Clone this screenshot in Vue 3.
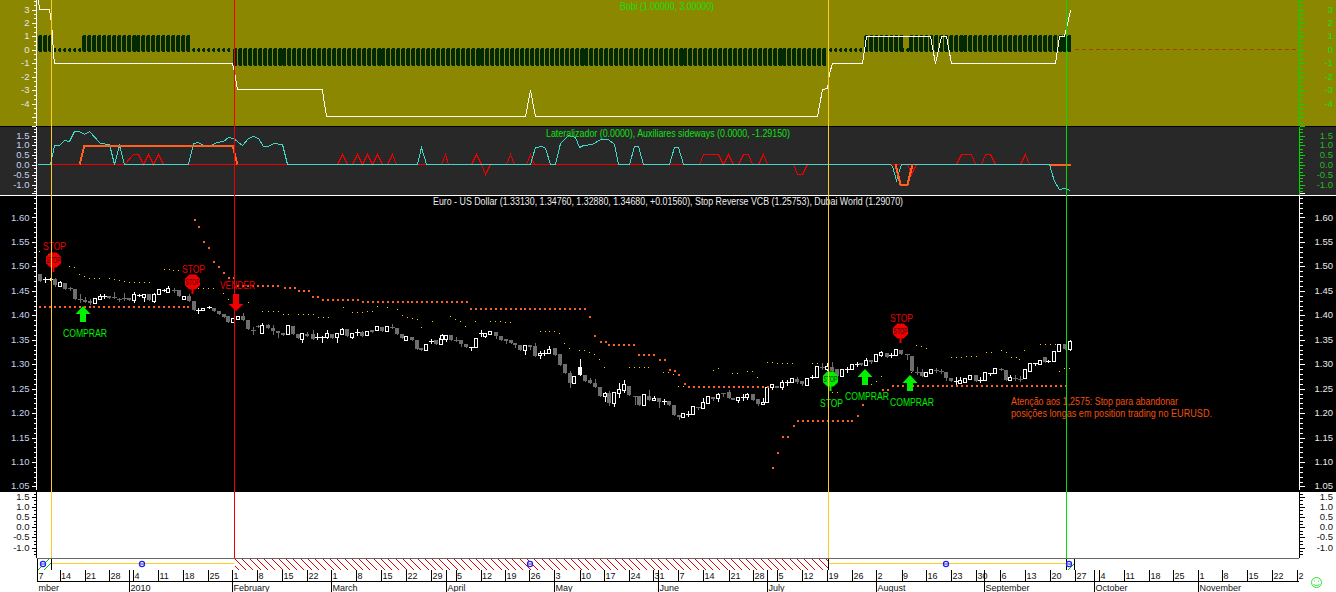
<script setup>
// zoomed reads of the price bars: [x, kind, top, bottom, wickTop, wickBottom]
// kinds: g gray body, w hollow, f filled white, d white doji, e gray doji
const partA = [
  [120,'g',237,258],[135,'d',253,253,247,260],[150,'d',252,252,249,256],[165,'g',252,270,250,272],[180,'w',262,272,258,272],[195,'g',264,282],[210,'e',280,280,276,284],[225,'g',282,312],[240,'e',312,312,298,322],[255,'g',316,320,305,322],[270,'g',318,322,312,326],[285,'w',308,324],[300,'w',303,311,298,312],[312,'d',302,302,296,308],[328,'g',303,308],[343,'e',307,307,290,310],[358,'e',313,313,308,318],[373,'e',309,309,295,315],[387,'g',310,314],[402,'w',298,316,292,320],[417,'d',300,300,296,304],[432,'w',297,305,297,317],[447,'g',298,316],[462,'w',297,318,295,320],[477,'w',282,298],[491,'d',285,285,282,288],[505,'w',280,290,272,290],[521,'e',285,285,280,290],[537,'g',285,304],[551,'w',302,312],[566,'g',302,318,296,318],[581,'g',318,345],[594,'d',344,344,338,355],[609,'w',338,346],[626,'d',337,337,333,340],[641,'g',338,348],[656,'g',347,358],[671,'g',356,365],[685,'g',364,380],[699,'w',370,380],[714,'w',364,372],[729,'g',362,375,354,375],[744,'g',375,402],[759,'e',404,404,396,418],[773,'e',393,393,390,396],[786,'w',390,413,384,413],[803,'g',390,398,388,400],[818,'g',400,408,390,416],[833,'g',407,415,407,425],[848,'g',415,420],[863,'w',390,418],[878,'g',392,418],[893,'g',418,430],[907,'w',415,432,415,440],[922,'g',418,422,410,422],[938,'g',418,432,406,432],[952,'d',425,425,413,432],[966,'d',427,427,424,440],[981,'w',414,425,406,430],[996,'g',416,428],[1011,'w',415,426,415,442],[1025,'w',403,416,400,416],[1042,'g',403,424],[1056,'w',415,425,415,430],[1071,'d',412,412,403,420],[1086,'g',412,422,408,424],[1100,'w',408,420],[1115,'g',406,412],[1130,'w',393,406],[1145,'g',396,408],[1160,'w',394,408],[1175,'e',395,395,388,398],[1190,'g',400,416],[1205,'g',416,430],[1219,'w',424,434],[1235,'g',427,434],[1250,'g',434,462],[1264,'g',458,466],[1278,'w',448,466],[1293,'d',437,437,432,445],[1307,'g',434,447],[1322,'w',430,448]
]
const partB = [
  [-10,'w',135,146,132,146],[3,'w',136,146,136,152],[18,'g',135,150],[33,'e',151,151,140,152],[48,'g',150,163,150,168],[63,'g',162,171],[78,'d',170,170,170,180],[93,'w',145,170],[107,'d',130,130,120,138],[121,'w',130,138,130,141],[136,'w',124,131],[153,'g',125,138,125,145],[168,'g',138,150],[182,'g',148,154,148,160],[197,'g',150,160],[211,'g',158,164,158,170],[225,'g',164,180],[240,'w',165,180,165,192],[255,'g',166,170,166,178],[271,'g',168,198,158,198],[285,'w',188,195,183,205],[298,'d',188,188,180,195],[313,'w',177,189,168,189],[329,'g',175,196],[345,'g',192,225],[360,'g',222,248],[375,'g',250,278,243,290],[388,'w',258,278],[404,'f',232,254,208,254],[420,'g',255,272],[435,'g',270,279,265,279],[449,'g',279,290,267,290],[465,'g',291,318],[479,'w',310,318,306,332],[492,'g',308,340,303,345],[507,'w',307,338,307,348],[521,'w',298,309,280,322],[537,'w',282,300,270,305],[553,'g',288,316],[570,'e',317,317,317,342],[582,'g',318,344],[596,'w',312,344],[611,'g',318,330,300,330],[626,'w',323,330,318,330],[641,'g',324,335,324,350],[656,'d',333,333,326,341],[671,'g',333,345],[686,'g',345,374],[701,'g',374,380,374,386],[714,'w',370,380],[729,'d',371,371,362,378],[744,'w',349,371],[759,'e',351,351,351,358],[773,'w',337,353,324,353],[788,'w',319,340],[805,'g',320,326,320,330],[819,'w',313,325,308,332],[835,'e',310,310,310,318],[851,'g',306,323,300,323],[864,'g',324,328],[878,'w',321,330,321,335],[893,'d',320,320,312,330],[907,'w',313,322,309,328],[924,'g',312,330],[939,'g',326,342,326,345],[953,'w',335,342,325,342],[966,'w',290,335],[981,'w',283,291,283,296],[997,'g',287,290],[1011,'w',277,291,270,297],[1027,'d',276,276,270,285],[1042,'w',265,275],[1056,'g',266,276,262,280],[1071,'g',274,282,274,286],[1086,'w',263,285],[1100,'d',260,260,255,265],[1115,'w',229,260],[1130,'e',232,232,220,236],[1145,'w',228,237,220,240],[1160,'g',232,242,216,242],[1175,'g',238,258],[1190,'w',237,258],[1205,'d',236,236,230,245],[1220,'w',223,236],[1235,'d',221,221,216,228],[1249,'g',219,224],[1263,'w',209,224,204,224],[1279,'g',210,216,210,220],[1293,'w',193,212],[1309,'w',186,195,182,198],[1326,'g',190,200]
]
const partC = [
  [332,'d',166,166,160,172],[348,'w',148,165],[364,'g',150,162],[380,'e',162,162,162,178],[396,'g',168,213],[410,'e',216,216,200,222],[425,'g',216,228,208,228],[438,'w',216,227],[453,'w',206,218],[468,'e',209,209,204,216],[483,'e',214,214,208,220],[497,'g',217,234,217,240],[512,'g',233,242],[527,'d',242,242,232,252],[541,'w',240,248,232,248],[555,'w',233,245],[571,'w',225,236],[588,'g',226,243],[601,'d',240,240,232,246],[615,'w',217,240],[630,'d',218,218,218,225],[645,'w',205,218],[662,'e',207,207,204,209],[678,'g',210,240],[690,'w',231,239,226,239],[706,'e',233,233,226,240],[719,'e',236,236,228,242],[735,'w',208,235],[750,'w',190,212],[764,'d',189,189,189,195],[780,'w',180,192],[796,'g',170,187],[805,'d',184,184,181,187],[822,'w',153,182],[837,'w',131,154],[855,'g',133,147],[870,'w',123,147,120,150]
]

const read = (rows, ox, oy) => rows.map(([x, kind, top, bot, wt, wb]) => ({
  x: Math.round(ox + x / 3),
  kind,
  top: Math.round(oy + top / 3),
  bot: Math.round(oy + bot / 3),
  wt: Math.round(oy + (wt ?? top) / 3),
  wb: Math.round(oy + (wb ?? bot) / 3),
}))
const candles = [...read(partA, 0, 195), ...read(partB, 445, 290), ...read(partC, 780, 300)]

// stop reverse, orange runs: [x1, x2, y]
const stopRuns = [
  [39,190,306],[237,278,285],[284,294,287],[298,309,290],[312,318,296],[322,357,299],[362,466,301],[470,585,308],
  [608,635,344],[638,654,354],[688,768,386],[797,852,420],[892,1070,385],
]
const stopSingles = [
  [194,219],[198,226],[203,241],[208,247],[213,261],[218,266],[223,272],[228,277],[233,277],
  [589,316],[594,335],[600,341],[605,341],[659,359],[664,359],[669,369],[674,370],[678,374],[684,383],
  [772,467],[777,452],[782,436],[787,436],[793,425],[857,415],[862,404],[882,389],[887,389],
]
const stopDots = [
  ...stopRuns.flatMap(([a, b, y]) => {
    const out = []
    for (let x = a; x <= b; x += 4.95) out.push([Math.round(x), y])
    return out
  }),
  ...stopSingles,
]

const dubaiA = [[118,168],[145,178],[208,214],[222,217],[238,238],[253,243],[268,250],[283,250],[297,250],[328,250],[343,252],[358,255],[373,257],[388,262],[403,262],[418,262],[433,262],[447,262],[492,222],[507,222],[520,225],[535,225],[595,280],[610,280],[625,280],[640,280],[670,295],[685,312],[700,320],[715,320],[745,320],[787,349],[803,349],[818,349],[833,349],[848,357],[863,357],[893,357],[908,357],[923,357],[938,357],[953,365],[968,365],[983,365],[1028,337],[1057,352],[1072,352],[1085,352],[1100,349],[1115,349],[1130,334],[1160,337],[1190,343],[1205,361],[1220,366],[1235,370],[1250,373],[1262,395],[1295,377]]
const dubaiB = [[15,79],[30,88],[45,93],[60,109],[90,94],[135,94],[150,94],[165,94],[180,97],[195,97],[285,124],[300,124],[313,124],[328,124],[343,130],[358,160],[373,175],[403,181],[418,181],[433,187],[448,193],[463,208],[478,232],[552,232],[567,232],[582,232],[597,232],[610,232],[655,247],[670,247],[685,253],[700,289],[715,289],[805,241],[820,235],[862,250],[877,250],[907,244],[922,244],[937,262],[967,217],[982,217],[997,220],[1012,220],[1027,220],[1042,220],[1102,220],[1117,220],[1130,226],[1145,226],[1160,307],[1175,307],[1279,283],[1294,274],[1309,259]]
const dubaiC = [[408,136],[423,139],[438,145],[393,217],[514,172],[529,172],[544,172],[558,169],[573,169],[588,169],[617,157],[632,157],[662,151],[677,157],[692,172],[707,172],[718,178],[733,151],[781,133],[796,133],[811,133],[826,133],[838,214],[853,205],[868,205]]
const place = (rows, ox, oy) => rows.map(([x, y]) => [Math.round(ox + x / 3), Math.round(oy + y / 3)])
const dubaiDots = [...place(dubaiA, 0, 195), ...place(dubaiB, 445, 290), ...place(dubaiC, 780, 300)]

// Bobi histogram: +1 / 0 / -1 states over the x axis
const bobiStates = [[38,52,1],[53,81,0],[82,190,1],[192,232,0],[233,828,-1],[829,863,0],[864,900,1],[901,908,0],[909,1071,1]]
const bobiBars = []
for (const [a, b, state] of bobiStates) {
  for (let x = a; x < b - 1; x += 4.95) {
    const left = Math.round(x)
    const w = state === 0 ? 3 : 4
    const top = state === 1 ? 35 : 48
    const bot = state === -1 ? 66 : 52
    bobiBars.push(`${left + 1},${top} ${left + w - 1},${top} ${left + w},${top + 1} ${left + w},${bot - 1} ${left + w - 1},${bot} ${left + 1},${bot} ${left},${bot - 1} ${left},${top + 1}`)
  }
}
const bobiLine = [[38,0],[39,9],[49,9],[51,23],[52,35],[53,53],[54,63],[232,63],[234,72],[237,89],[322,89],[323,97],[326,116],[525,116],[530,90],[535,116],[817,116],[822,89],[827,88],[829,73],[832,63],[862,63],[866,36],[930,36],[935,63],[941,36],[946,36],[951,63],[1055,63],[1059,36],[1064,36],[1067,24],[1070,10]]
  .map(([x, y]) => `${x + 0.5},${y + 0.5}`).join(' ')

const lateralPath = (rows, ox) => rows.map(([x, y]) => `${Math.round(ox + x / 3) + 0.5},${Math.floor(y / 3) + 0.5}`).join(' ')
const cyanLine = [
  lateralPath([[110,493],[150,493],[163,436],[178,436],[193,421],[208,424],[223,394],[238,394],[253,403],[268,394],[300,430],[326,433],[342,493],[357,436],[372,493],[565,493],[580,430],[595,427],[610,436],[630,436],[650,427],[670,424],[683,412],[700,415],[725,436],[745,415],[760,409],[775,415],[790,439],[805,439],[820,430],[845,433],[862,493],[1250,493],[1262,442],[1277,493],[1335,493]], 0),
  lateralPath([[255,493],[270,442],[290,438],[300,445],[316,493],[330,493],[345,430],[370,406],[390,412],[402,442],[415,436],[440,433],[465,418],[490,418],[507,433],[520,493],[553,493],[568,439],[580,439],[595,493],[673,493],[688,442],[700,442],[713,493],[1335,493]], 445),
  lateralPath([[0,493],[5,500],[18,540],[33,493],[478,493],[492,545],[507,568],[523,564],[539,570]], 890),
].join(' ')
const orangeLine = lateralPath([[238,493],[253,435],[697,435],[712,493]], 0)
const orangeDip = lateralPath([[15,493],[30,552],[50,552],[65,493]], 890)
const orangeTail = lateralPath([[478,493],[540,493]], 890)
const redSpikes = [
  lateralPath([[372,493],[400,462],[415,462],[430,493],[445,462],[460,493],[475,462],[490,493]], 0),
  lateralPath([[1012,493],[1025,462],[1040,493]], 0),
  lateralPath([[1055,493],[1070,462],[1085,493],[1100,462],[1115,493],[1130,462],[1145,493]], 0),
  lateralPath([[1160,493],[1175,462],[1188,493]], 0),
  lateralPath([[-12,493],[0,462],[10,493]], 445),
  lateralPath([[78,493],[92,462],[107,493],[120,522],[135,493]], 445),
  lateralPath([[182,493],[196,462],[208,493]], 445),
  lateralPath([[242,493],[255,462],[268,493]], 445),
  lateralPath([[762,493],[775,462],[820,462],[835,493],[850,462],[865,493]], 445),
  lateralPath([[880,493],[893,462],[908,462],[922,493]], 445),
  lateralPath([[940,493],[953,462],[967,493]], 445),
  lateralPath([[1043,493],[1057,522],[1072,522],[1087,493]], 445),
  lateralPath([[52,493],[62,522],[77,493]], 890),
  lateralPath([[197,493],[212,462],[242,462],[255,493]], 890),
  lateralPath([[273,493],[285,462],[300,462],[315,493]], 890),
  lateralPath([[390,493],[404,462],[418,493]], 890),
]

const scale = (labels, first, step) => labels.map((text, i) => ({ text, y: first + step * i }))
const ticksFor = (first, step, divs, top, bottom) => {
  const out = []
  const sub = step / divs
  const start = first - Math.ceil((first - top) / sub) * sub
  let n = Math.round((start - first) / sub)
  for (let y = start; y <= bottom; y += sub, n++) {
    out.push({ y: Math.round(y) + 0.5, major: n % divs === 0 })
  }
  return out
}

const panes = [
  { key: 'bobi', top: 0, h: 126, labels: scale(['3','2','1','0','-1','-2','-3','-4'], 9.5, 13.45), ticks: ticksFor(9.5, 13.45, 3, 0, 126) },
  { key: 'lateral', top: 127, h: 68, labels: scale(['1.5','1.0','0.5','0.0','-0.5','-1.0'], 135.5, 9.85), ticks: ticksFor(135.5, 9.85, 3, 127, 194) },
  { key: 'price', top: 196, h: 294, labels: scale(['1.60','1.55','1.50','1.45','1.40','1.35','1.30','1.25','1.20','1.15','1.10','1.05'], 217.5, 24.45), ticks: ticksFor(217.5, 24.45, 5, 196, 489) },
  { key: 'blank', top: 492, h: 66, labels: scale(['1.5','1.0','0.5','0.0','-0.5','-1.0'], 497, 10.1), ticks: ticksFor(497, 10.1, 3, 492, 557) },
]

const stopSigns = [
  { cx: 53.5, cy: 260, tone: 'red', lx: 54.5, ly: 246 },
  { cx: 192.5, cy: 282, tone: 'red', lx: 193.5, ly: 269 },
  { cx: 900.5, cy: 331, tone: 'red', lx: 901.5, ly: 318 },
  { cx: 830.5, cy: 379, tone: 'green', lx: 831.5, ly: 403 },
]
const octagon = (cx, cy) => {
  const a = 7.5
  const b = 3.2
  return [[-b,-a],[b,-a],[a,-b],[a,b],[b,a],[-b,a],[-a,b],[-a,-b]].map(([x, y]) => `${cx + x},${cy + y}`).join(' ')
}
const upArrow = (x, y) => `${x},${y} ${x + 7.5},${y + 8} ${x + 3},${y + 8} ${x + 3},${y + 16} ${x - 3},${y + 16} ${x - 3},${y + 8} ${x - 7.5},${y + 8}`
const downArrow = (x, y) => `${x},${y} ${x + 7.5},${y - 7} ${x + 3},${y - 7} ${x + 3},${y - 17} ${x - 3},${y - 17} ${x - 3},${y - 7} ${x - 7.5},${y - 7}`
const upArrows = [[83,306],[865,369],[910,375]]
const buyLabels = [[85,337],[867,399.5],[912,406]]

const weeks = [[37,'7'],[59.5,'14'],[84.5,'21'],[109,'28'],[133,'4'],[158,'11'],[183,'18'],[208,'25'],[232,'1'],[257,'8'],[282,'15'],[307,'22'],[331,'1'],[356,'8'],[381,'15'],[406,'22'],[431,'29'],[455.5,'5'],[480.5,'12'],[505,'19'],[529,'26'],[554,'3'],[579.5,'10'],[604,'17'],[629,'24'],[653,'31'],[678,'7'],[703,'14'],[729,'21'],[753,'28'],[777,'5'],[802,'12'],[827,'19'],[852,'26'],[876,'2'],[901.5,'9'],[926,'16'],[951,'23'],[976,'30'],[1000,'6'],[1025,'13'],[1050,'20'],[1075,'27'],[1099,'4'],[1124,'11'],[1149,'18'],[1173,'25'],[1198,'1'],[1222,'8'],[1247,'15'],[1272,'22'],[1297,'2']]
const months = [[37,'mber',false],[129,'2010',true],[232,'February',true],[331,'March',true],[446,'April',true],[554,'May',true],[658,'June',true],[767,'July',true],[876,'August',true],[984,'September',true],[1094,'October',true],[1198,'November',true]]
const bandMarks = [43,142,530,946,1069]

// red hatching between the sell and buy cursors, one diagonal every 7.3px
const hatchLines = []
for (let x = 235; x < 828; x += 7.3) {
  const x1 = Math.round(x)
  const run = Math.min(11, 828 - x1)
  hatchLines.push({ x1, y1: 559, x2: x1 + run, y2: 559 + run })
}
for (let y = 566; y < 570; y += 7.3) hatchLines.push({ x1: 235, y1: y, x2: 235 + 570 - y, y2: 570 })
</script>

<template>
  <div class="chart">
    <div v-for="pane in panes" :key="pane.key" class="pane" :class="`pane-${pane.key}`">
      <svg class="pane-svg" width="1336" :height="pane.h" :viewBox="`0 ${pane.top} 1336 ${pane.h}`">
        <line class="axis-left" x1="36.5" :y1="pane.top" x2="36.5" :y2="pane.top + pane.h" />
        <line class="axis-right" x1="1299.5" :y1="pane.top" x2="1299.5" :y2="pane.top + pane.h" />
        <g v-for="tick in pane.ticks" :key="tick.y">
          <line class="axis-left" :x1="tick.major ? 32 : 34" :y1="tick.y" x2="36" :y2="tick.y" />
          <line class="axis-right" x1="1300" :y1="tick.y" :x2="tick.major ? 1305 : 1303" :y2="tick.y" />
        </g>
        <g v-for="label in pane.labels" :key="label.text">
          <text class="label-left" x="29.5" :y="label.y + 3">{{ label.text }}</text>
          <text class="label-right" x="1333" :y="label.y + 3">{{ label.text }}</text>
        </g>

        <template v-if="pane.key === 'bobi'">
          <line class="zero-dash" x1="1075" y1="49.5" x2="1298" y2="49.5" />
          <polygon v-for="bar in bobiBars" :key="bar" class="bobi-bar" :points="bar" />
          <polyline class="bobi-line" :points="bobiLine" />
          <text class="caption caption-green" x="667" y="9.5" textLength="94" lengthAdjust="spacingAndGlyphs">Bobi (1.00000, 3.00000)</text>
        </template>

        <template v-if="pane.key === 'lateral'">
          <polyline class="lat-red" points="51,164.5 1066,164.5" />
          <polyline v-for="spike in redSpikes" :key="spike" class="lat-red" :points="spike" />
          <polyline class="lat-cyan" :points="cyanLine" />
          <polyline class="lat-orange" :points="orangeLine" />
          <polyline class="lat-orange" :points="orangeDip" />
          <polyline class="lat-orange" :points="orangeTail" />
          <text class="caption caption-green" x="668" y="136.5" textLength="244" lengthAdjust="spacingAndGlyphs">Lateralizador (0.0000), Auxiliares sideways (0.0000, -1.29150)</text>
        </template>

        <template v-if="pane.key === 'price'">
          <text class="caption caption-white" x="668" y="205" textLength="470" lengthAdjust="spacingAndGlyphs">Euro - US Dollar (1.33130, 1.34760, 1.32880, 1.34680, +0.01560), Stop Reverse VCB (1.25753), Dubai World (1.29070)</text>
          <rect v-for="(dot, i) in dubaiDots" :key="'y' + i" class="dubai-dot" :x="dot[0]" :y="dot[1]" width="1" height="1" />
          <g v-for="(c, i) in candles" :key="'c' + i">
            <line :class="c.kind === 'g' || c.kind === 'e' ? 'wick-gray' : 'wick-white'" :x1="c.x + 0.5" :y1="c.wt" :x2="c.x + 0.5" :y2="c.wb + 1" />
            <rect v-if="c.kind === 'g'" class="body-gray" :x="c.x - 2" :y="c.top" width="4" :height="Math.max(c.bot - c.top, 2)" />
            <rect v-else-if="c.kind === 'w'" class="body-hollow" :x="c.x - 1.5" :y="c.top + 0.5" width="3" :height="Math.max(c.bot - c.top, 2)" />
            <rect v-else-if="c.kind === 'f'" class="body-white" :x="c.x - 2" :y="c.top" width="4" :height="c.bot - c.top" />
            <line v-else :class="c.kind === 'e' ? 'wick-gray' : 'wick-white'" :x1="c.x - 2" :y1="c.top + 0.5" :x2="c.x + 3" :y2="c.top + 0.5" />
          </g>
          <rect v-for="(dot, i) in stopDots" :key="'o' + i" class="stop-dot" :x="dot[0]" :y="dot[1]" width="2" height="2" />

          <g v-for="sign in stopSigns" :key="sign.cx">
            <rect :class="`fill-${sign.tone}`" :x="sign.cx - 1" :y="sign.cy + 6" width="2" height="6" />
            <polygon :class="`fill-${sign.tone}`" :points="octagon(sign.cx, sign.cy)" />
            <text class="sign-inner" :x="sign.cx" :y="sign.cy + 3" textLength="14" lengthAdjust="spacingAndGlyphs">STOP</text>
            <text class="marker-text" :class="`fill-${sign.tone}`" :x="sign.lx" :y="sign.ly + 3.5" textLength="23" lengthAdjust="spacingAndGlyphs">STOP</text>
          </g>
          <polygon v-for="a in upArrows" :key="a[0]" class="fill-green" :points="upArrow(a[0], a[1])" />
          <text v-for="b in buyLabels" :key="b[0]" class="marker-text fill-green" :x="b[0]" :y="b[1]" textLength="44" lengthAdjust="spacingAndGlyphs">COMPRAR</text>
          <polygon class="fill-red" :points="downArrow(236, 311)" />
          <text class="marker-text fill-red" x="237.5" y="288.5" textLength="35" lengthAdjust="spacingAndGlyphs">VENDER</text>
          <text class="note" x="1011" y="405" textLength="167" lengthAdjust="spacingAndGlyphs">Atenção aos 1,2575: Stop para abandonar</text>
          <text class="note" x="1011" y="417" textLength="201" lengthAdjust="spacingAndGlyphs">posições longas em position trading no EURUSD.</text>
        </template>
      </svg>
    </div>

    <svg class="timeline" width="1336" height="34" viewBox="0 558 1336 34">
      <line class="hatch-green" x1="38" y1="570" x2="49" y2="559" />
      <line class="hatch-green" x1="44" y1="570" x2="51" y2="563" />
      <line class="hatch-green" x1="1068" y1="570" x2="1074" y2="564" />
      <line v-for="h in hatchLines" :key="h.x1 + '-' + h.y1" class="hatch-red" :x1="h.x1" :y1="h.y1" :x2="h.x2" :y2="h.y2" />
      <line class="band-yellow" x1="51" y1="563.5" x2="234" y2="563.5" />
      <line class="band-yellow" x1="828" y1="563.5" x2="1066" y2="563.5" />
      <line class="band-top" x1="37" y1="558.5" x2="1299" y2="558.5" />
      <line v-for="x in [37.5, 51.5, 828.5, 1066.5, 1074.5]" :key="x" class="tick" :x1="x" y1="559" :x2="x" y2="570" />
      <g v-for="x in bandMarks" :key="x">
        <circle class="mark-ring" :cx="x" cy="564" r="2.6" />
        <line class="mark-bar" :x1="x - 2" y1="564" :x2="x + 2" y2="564" />
      </g>

      <g v-for="week in weeks" :key="week[0]">
        <line class="tick" :x1="Math.round(week[0]) + 0.5" y1="570" :x2="Math.round(week[0]) + 0.5" y2="581" />
        <text class="date" :x="week[0] + 1.5" y="579">{{ week[1] }}</text>
      </g>
      <line class="tick" x1="37" y1="581.5" x2="1299" y2="581.5" />
      <g v-for="month in months" :key="month[0]">
        <line v-if="month[2]" class="tick" :x1="month[0] + 0.5" y1="570" :x2="month[0] + 0.5" y2="592" />
        <text class="date" :x="month[0] + 1.5" y="590.5">{{ month[1] }}</text>
      </g>

      <g class="smiley">
        <circle cx="1316.5" cy="582.5" r="5" />
        <circle class="eye" cx="1314.5" cy="581" r="0.6" />
        <circle class="eye" cx="1318.5" cy="581" r="0.6" />
        <path d="M1313.5 584c1 2 5 2 6 0" />
      </g>
    </svg>

    <svg class="cursors" width="1336" height="570" viewBox="0 0 1336 570">
      <line class="cursor-yellow" x1="51.5" y1="0" x2="51.5" y2="558" />
      <line class="cursor-red" x1="234.5" y1="0" x2="234.5" y2="558" />
      <line class="cursor-yellow" x1="828.5" y1="0" x2="828.5" y2="558" />
      <line class="cursor-green" x1="1066.5" y1="0" x2="1066.5" y2="559" />
    </svg>
  </div>
</template>

<style>
html, body { background: #fff; overflow: hidden; }
</style>

<style scoped>
.chart {
  position: relative;
  display: flex;
  flex-direction: column;
  width: 1336px;
  height: 592px;
  overflow: hidden;
  background: #000;
  font-family: "Liberation Sans", Arial, sans-serif;
}

.pane { flex: none; }
.pane-svg, .timeline { display: block; }
.pane-svg { overflow: visible; }

.pane-bobi { height: 126px; margin-bottom: 1px; background: #8b8700; --axis-l: #fff; --axis-r: #00d800; --text-l: #e4e8f0; --text-r: #10e010; }
.pane-lateral { height: 68px; border-bottom: 1px solid #fff; background: #282828; --axis-l: #fff; --axis-r: #00d800; --text-l: #c6d4ee; --text-r: #22b822; }
.pane-price { height: 294px; margin-bottom: 2px; background: #000; --axis-l: #fff; --axis-r: #fff; --text-l: #c6d4ee; --text-r: #e8e8e8; }
.pane-blank { height: 66px; background: #fff; --axis-l: #000; --axis-r: #000; --text-l: #111; --text-r: #111; }

.timeline { flex: none; background: #fff; }

.axis-left { stroke: var(--axis-l); stroke-width: 1; shape-rendering: crispEdges; }
.axis-right { stroke: var(--axis-r); stroke-width: 1; shape-rendering: crispEdges; }
.label-left, .label-right { font-size: 9.5px; text-anchor: end; }
.label-left { fill: var(--text-l); }
.label-right { fill: var(--text-r); }

.caption { font-size: 10px; text-anchor: middle; }
.caption-green { fill: #10e010; }
.caption-white { fill: #eee; }

.zero-dash { stroke: #a84000; stroke-dasharray: 4 3; shape-rendering: crispEdges; }
.bobi-bar { fill: #022b05; shape-rendering: crispEdges; }
.bobi-line { fill: none; stroke: #fff; stroke-width: 1; shape-rendering: crispEdges; }

.lat-red { fill: none; stroke: #f00000; stroke-width: 1; shape-rendering: crispEdges; }
.lat-cyan { fill: none; stroke: #40d8c8; stroke-width: 1; shape-rendering: crispEdges; }
.lat-orange { fill: none; stroke: #ff6020; stroke-width: 2; shape-rendering: crispEdges; }

.wick-gray { stroke: #6e6e6e; stroke-width: 1; shape-rendering: crispEdges; }
.wick-white { stroke: #fff; stroke-width: 1; shape-rendering: crispEdges; }
.body-gray { fill: #6e6e6e; shape-rendering: crispEdges; }
.body-hollow { fill: #000; stroke: #fff; stroke-width: 1; shape-rendering: crispEdges; }
.body-white { fill: #fff; shape-rendering: crispEdges; }
.stop-dot { fill: #ff6020; shape-rendering: crispEdges; }
.dubai-dot { fill: #ffcc00; shape-rendering: crispEdges; }

.fill-red { fill: #f00000; }
.fill-green { fill: #00f000; }
.marker-text { font-size: 10.5px; text-anchor: middle; }
.sign-inner { font-size: 9px; text-anchor: middle; fill: #000; opacity: 0.8; }
.note { font-size: 10px; fill: #f05010; }

.hatch-red { stroke: #e00000; stroke-width: 1; shape-rendering: crispEdges; }
.hatch-green { stroke: #00c000; stroke-width: 1; shape-rendering: crispEdges; }
.band-yellow { stroke: #ffcc22; stroke-width: 1; shape-rendering: crispEdges; }
.band-top { stroke: #666; stroke-width: 1; shape-rendering: crispEdges; }
.tick { stroke: #000; stroke-width: 1; shape-rendering: crispEdges; }
.mark-ring { fill: #fff; stroke: #2222ee; stroke-width: 1.2; }
.mark-bar { stroke: #2222ee; stroke-width: 1; }
.date { font-size: 9px; fill: #111; }

.smiley circle, .smiley path { fill: none; stroke: #30e030; stroke-width: 1; }
.smiley .eye { fill: #30e030; stroke: none; }

.cursors { position: absolute; left: 0; top: 0; pointer-events: none; }
.cursor-yellow { stroke: #ffcc22; stroke-width: 1; shape-rendering: crispEdges; }
.cursor-red { stroke: #f00000; stroke-width: 1; shape-rendering: crispEdges; }
.cursor-green { stroke: #00e000; stroke-width: 1; shape-rendering: crispEdges; }
</style>
